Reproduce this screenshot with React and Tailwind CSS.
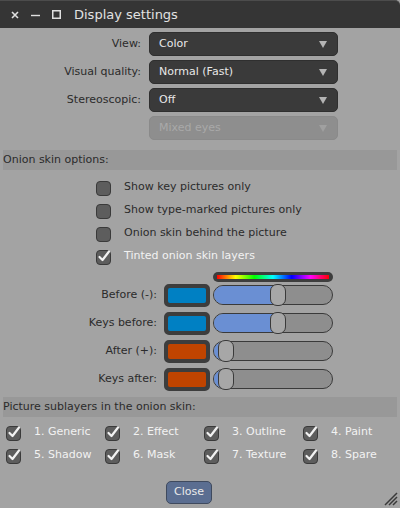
import React from 'react'

const FONT = { fontFamily: '"DejaVu Sans", Verdana, sans-serif' }

function CheckBox({ checked }) {
  return (
    <svg width="16" height="16" viewBox="0 0 16 16" className="overflow-visible shrink-0">
      <rect x="0.5" y="1.5" width="14" height="14" rx="3.5" fill="#5d5d5d" stroke="#3a3a3a" />
      {checked && (
        <polyline points="3.5,8 6.5,11 13,2.5" fill="none" stroke="#f2f2f2" strokeWidth="2.2" strokeLinecap="round" strokeLinejoin="round" />
      )}
    </svg>
  )
}

function Select({ value, disabled }) {
  return (
    <div
      className={`ml-2 w-[189px] h-6 rounded-[5px] flex items-center justify-between pl-[9px] pr-[10px] text-[11px] border ${
        disabled ? 'bg-[#8e8e8e] border-[#8a8a8a] text-[#a9a9a9]' : 'bg-[#3a3a3a] border-[#2f2f2f] text-[#e8e8e8]'
      }`}
    >
      <span>{value}</span>
      <svg width="8" height="7" viewBox="0 0 8 7">
        <polygon points="0,0 8,0 4,7" fill={disabled ? '#a0a0a0' : '#b4b4b4'} />
      </svg>
    </div>
  )
}

function SectionBar({ children, className = '' }) {
  return (
    <div className={`mx-[3px] h-5 bg-[#989898] flex items-center text-[11px] text-[#2b2b2b] ${className}`}>{children}</div>
  )
}

function SliderRow({ label, color, knob, fill }) {
  return (
    <div className="flex items-center h-6">
      <div className="w-[157px] text-right text-[11px] text-[#2b2b2b]">{label}</div>
      <div className="ml-[7px] w-[46px] h-[23px] rounded-[5px] border-[3px] border-[#3d3d3d] p-[1px] bg-[#3d3d3d]">
        <div className="w-full h-full rounded-[2px]" style={{ backgroundColor: color }} />
      </div>
      <div className="ml-[3px] relative w-[120px] h-[20px] rounded-full border border-[#3a3a3a] bg-[#8e8e8e] overflow-visible">
        <div className="absolute left-0 top-0 bottom-0 rounded-l-full bg-[#6a8fd3]" style={{ width: fill }} />
        <div
          className="absolute top-[-2px] w-[16px] h-[22px] rounded-[7px] border border-[#3a3a3a] bg-[#a7a7a7]"
          style={{ left: knob }}
        />
      </div>
    </div>
  )
}

const sublayers = [
  '1. Generic', '2. Effect', '3. Outline', '4. Paint',
  '5. Shadow', '6. Mask', '7. Texture', '8. Spare',
]

export default function App() {
  return (
    <div className="relative w-[400px] h-[508px] bg-[#a3a3a3] flex flex-col overflow-hidden" style={FONT}>
      {/* Title bar */}
      <div className="h-[28px] bg-[#353535] border-t border-[#4c4c4c] rounded-tr-[5px] flex items-center shrink-0">
        <svg width="8" height="8" viewBox="0 0 8 8" className="ml-[11px]">
          <path d="M1 1 L7 7 M7 1 L1 7" stroke="#e0e0e0" strokeWidth="1.6" />
        </svg>
        <svg width="9" height="8" viewBox="0 0 9 8" className="ml-[12px]">
          <path d="M0 4.5 H9" stroke="#e0e0e0" strokeWidth="1.4" />
        </svg>
        <svg width="9" height="9" viewBox="0 0 9 9" className="ml-[12px]">
          <rect x="0.75" y="0.75" width="7.5" height="7.5" fill="none" stroke="#e0e0e0" strokeWidth="1.5" />
        </svg>
        <span className="ml-[13px] text-[13px] text-[#e2e2e2]">Display settings</span>
      </div>

      {/* Dropdown rows */}
      <div className="flex flex-col gap-1 pt-1">
        {[
          ['View:', 'Color'],
          ['Visual quality:', 'Normal (Fast)'],
          ['Stereoscopic:', 'Off'],
        ].map(([l, v]) => (
          <div key={l} className="flex items-center h-6">
            <div className="w-[141px] text-right text-[11px] text-[#2b2b2b]">{l}</div>
            <Select value={v} />
          </div>
        ))}
        <div className="flex items-center h-6">
          <div className="w-[141px]" />
          <Select value="Mixed eyes" disabled />
        </div>
      </div>

      <SectionBar className="mt-[10px]">Onion skin options:</SectionBar>

      <div className="flex flex-col mt-[6px] pl-[96px]">
        {[
          ['Show key pictures only', false],
          ['Show type-marked pictures only', false],
          ['Onion skin behind the picture', false],
          ['Tinted onion skin layers', true],
        ].map(([t, c]) => (
          <div key={t} className="flex items-center h-[23px]">
            <CheckBox checked={c} />
            <span className={`ml-[12px] text-[11px] ${c ? 'text-[#f2f2f2]' : 'text-[#2b2b2b]'}`}>{t}</span>
          </div>
        ))}
      </div>

      {/* Hue strip */}
      <div className="ml-[213px] mt-1 w-[120px] h-[10px] rounded-full bg-[#3d3d3d] flex items-center px-[4px]">
        <div className="w-full h-[4px] bg-[linear-gradient(to_right,#ff0000,#ffff00,#00ff00,#00ffff,#0000ff,#ff00ff,#ff0000)]" />
      </div>

      <div className="flex flex-col gap-1 mt-[1px]">
        <SliderRow label="Before (-):" color="#0080c3" knob="56px" fill="64px" />
        <SliderRow label="Keys before:" color="#0080c3" knob="56px" fill="64px" />
        <SliderRow label="After (+):" color="#c04400" knob="4px" fill="10px" />
        <SliderRow label="Keys after:" color="#c04400" knob="4px" fill="10px" />
      </div>

      <SectionBar className="mt-[6px]">Picture sublayers in the onion skin:</SectionBar>

      <div className="grid grid-cols-[99px_99px_99px_99px] mt-1 pl-[6px]">
        {sublayers.map((s) => (
          <div key={s} className="flex items-center h-[23px]">
            <CheckBox checked />
            <span className="ml-[12px] text-[11px] text-[#f2f2f2] whitespace-nowrap">{s}</span>
          </div>
        ))}
      </div>

      <div className="flex pl-[166px] mt-[14px]">
        <button className="w-[46px] h-[23px] rounded-[5px] bg-[#5b6e91] border border-[#3f4a5e] text-[11px] text-[#eaeaea]">
          Close
        </button>
      </div>

      {/* Resize grip */}
      <svg width="16" height="16" viewBox="0 0 16 16" className="absolute right-[2px] bottom-[2px]">
        <path d="M15 3 L3 15 M15 7 L7 15 M15 11 L11 15" stroke="#3a3a3a" strokeWidth="1.5" />
      </svg>
    </div>
  )
}
